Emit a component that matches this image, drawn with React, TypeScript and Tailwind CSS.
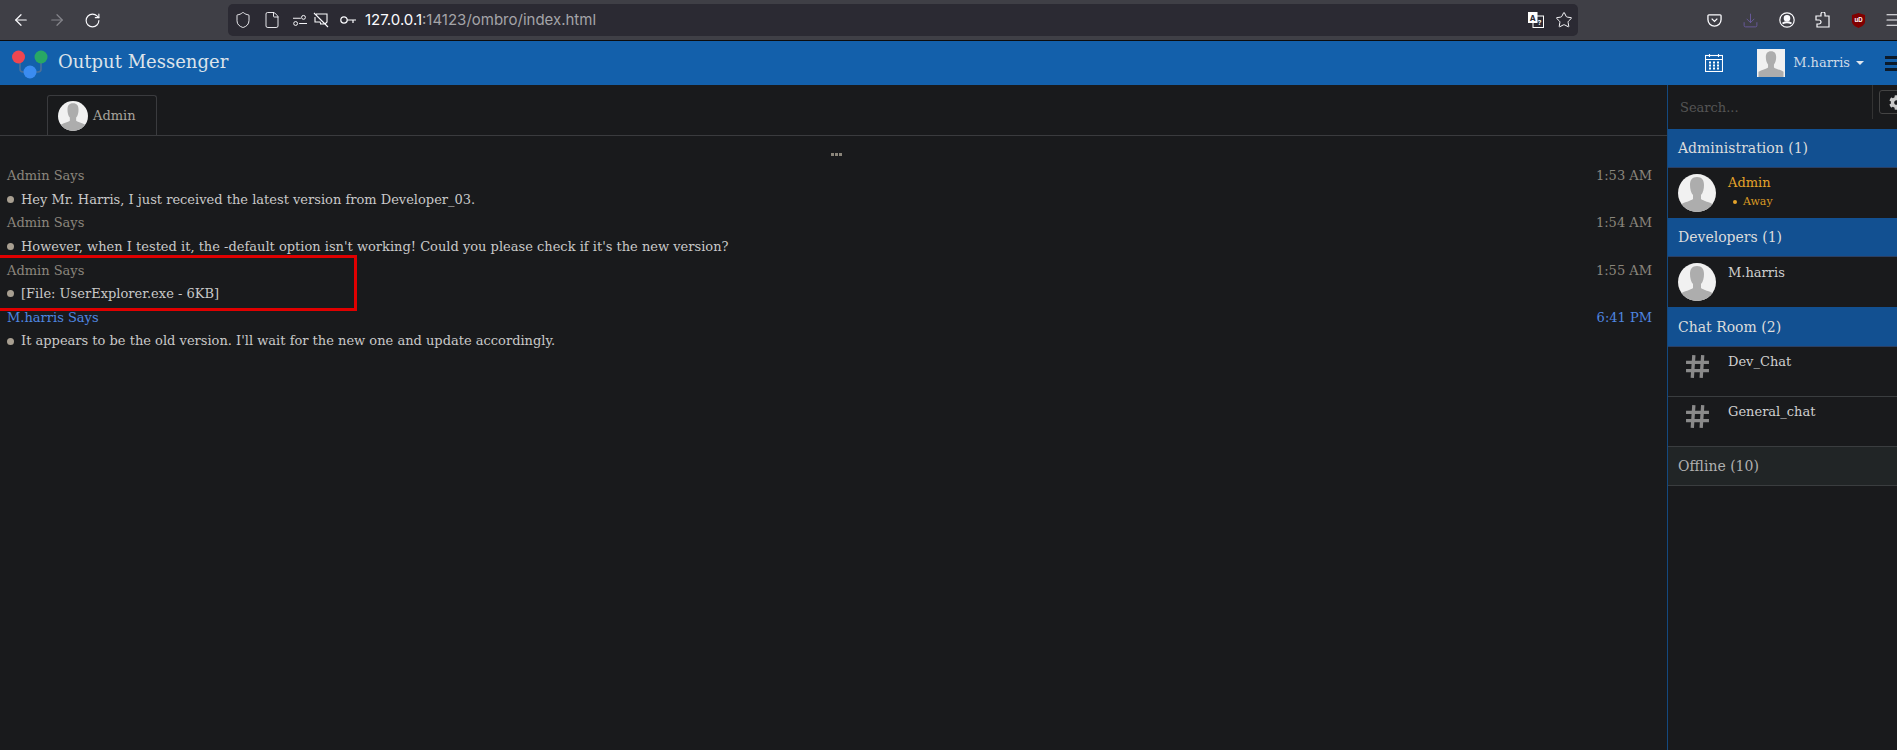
import { ArrowLeft, ArrowRight, RotateCw, Shield, File, Star, Download, Menu } from 'lucide-react';
import { FaCog } from 'react-icons/fa';

const serif = 'font-["DejaVu_Serif",serif]';

function Avatar({ size, round = true }: { size: string; round?: boolean }) {
  return (
    <svg viewBox="0 0 38 38" className={`${size} shrink-0 ${round ? 'rounded-full' : ''}`}>
      <rect width="38" height="38" fill="#f1f1f1" />
      <path d="M19 3c-5 0-7 3-7 8 0 4 1 8 3 10v4c-2 2-9 3-13 6v7h34v-7c-4-3-11-4-13-6v-4c2-2 3-6 3-10 0-5-2-8-7-8z" fill="#adadad" />
    </svg>
  );
}

function Message({ who, time, text, me }: { who: string; time: string; text: string; me?: boolean }) {
  return (
    <div className="flex flex-col">
      <div className={`flex h-[23.2px] items-center justify-between pr-[15px] pl-[7px] ${me ? 'text-[#4f86e0]' : 'text-[#8b867c]'}`}>
        <span>{who}</span>
        <span>{time}</span>
      </div>
      <div className="flex h-[24px] items-center gap-[7px] pl-[7px] text-[#c9c9c9]">
        <span className="h-[7px] w-[7px] rounded-full bg-[#a89f91]" />
        <span>{text}</span>
      </div>
    </div>
  );
}

function GroupHeader({ label, offline, tall }: { label: string; offline?: boolean; tall?: boolean }) {
  return (
    <div className={`flex items-center border-b pl-[10px] text-[14px] ${tall ? 'h-[40px] pt-px' : 'h-[39px]'} ${offline ? 'border-[#3a3d3f] bg-[#212526] text-[#b0b0b0]' : 'border-[#2b3f63] bg-[#125091] text-[#dcdcdc]'}`}>
      {label}
    </div>
  );
}

function ContactRow({ name, away }: { name: string; away?: boolean }) {
  return (
    <div className="flex h-[50px] items-start gap-[12px] pt-[6px] pl-[10px]">
      <Avatar size="h-[38px] w-[38px]" />
      <div className="flex flex-col">
        <span className={`text-[13px] leading-[17px] ${away ? 'text-[#e5a32a]' : 'mt-px text-[#d0d0d0]'}`}>{name}</span>
        {away && (
          <span className="mt-[3px] flex items-center gap-[6px] pl-[5px] text-[11px] leading-[15px] text-[#d99a24]">
            <span className="h-[4px] w-[4px] rounded-full bg-[#e5a32a]" />
            Away
          </span>
        )}
      </div>
    </div>
  );
}

function RoomRow({ name }: { name: string }) {
  return (
    <div className="flex h-[50px] items-start gap-[12px] border-b border-[#3a3d3f] pt-[6px] pl-[10px]">
      <span className="flex h-[26px] w-[38px] items-center justify-center">
        <svg viewBox="0 0 24 24" className="h-[25px] w-[25px]" fill="none" stroke="#8a8a8a" strokeWidth="3.2">
          <path d="M1 8h22M1 16h22M8.5 1 7 23M17 1l-1.5 22" />
        </svg>
      </span>
      <span className="text-[13px] leading-[17px] text-[#d0d0d0]">{name}</span>
    </div>
  );
}

export default function App() {
  return (
    <div className={`flex h-[750px] w-[1897px] flex-col overflow-hidden bg-[#191a1c] text-[13px] ${serif}`}>
      {/* browser chrome */}
      <div className="flex h-[41px] shrink-0 items-center border-b border-[#0c0c0d] bg-[#3f3f46] font-['Inter',sans-serif] text-[#fbfbfe]">
        <div className="flex w-[228px] items-center gap-[18px] pl-[12px]">
          <ArrowLeft size={18} strokeWidth={1.6} />
          <ArrowRight size={18} strokeWidth={1.6} className="text-[#85858b]" />
          <RotateCw size={17} strokeWidth={1.6} />
        </div>
        <div className="flex h-[32px] w-[1350px] items-center rounded-[5px] bg-[#2b2a33] pl-[6px]">
          <Shield size={18} strokeWidth={1.2} />
          <File size={18} strokeWidth={1.2} className="ml-[11px]" />
          <svg viewBox="0 0 16 16" className="ml-[12px] h-[14px] w-[14px]" fill="none" stroke="#fbfbfe" strokeWidth="1.1">
            <path d="M0 6h9M7 12h9" />
            <circle cx="12" cy="5" r="2.2" />
            <circle cx="3" cy="12" r="2.2" />
          </svg>
          <svg viewBox="0 0 16 16" className="ml-[6px] h-[16px] w-[16px]" fill="none" stroke="#fbfbfe" strokeWidth="1.1">
            <path d="M1 1 15 15M3 2h11v8l-2 2H7M2 5v5h5l1 2" />
          </svg>
          <svg viewBox="0 0 16 10" className="ml-[11px] h-[10px] w-[16px]" fill="none" stroke="#fbfbfe" strokeWidth="1.2">
            <circle cx="4" cy="5" r="3.2" />
            <path d="M7 5h9M13 5v3" />
          </svg>
          <span className="ml-[9px] text-[15px]">
            127.0.0.1<span className="text-[#a4a4a8]">:14123/ombro/index.html</span>
          </span>
          <div className="ml-auto flex items-center gap-[11px] pr-[5px]">
            <svg viewBox="0 0 16 16" className="h-[16px] w-[16px]">
              <rect x="5" y="4" width="10.5" height="11.5" fill="none" stroke="#fff" />
              <rect x="0" y="0" width="9.5" height="11" fill="#fff" />
              <text x="4.7" y="8.5" textAnchor="middle" fontSize="8" fontWeight="700" fill="#2b2a33">A</text>
              <text x="11.5" y="13" textAnchor="middle" fontSize="6.5" fontWeight="700" fill="#fff">?</text>
            </svg>
            <Star size={18} strokeWidth={1.3} />
          </div>
        </div>
        <div className="ml-auto flex items-center">
          <svg viewBox="0 0 16 16" className="mr-[20px] h-[15px] w-[15px]" fill="none" stroke="#fbfbfe" strokeWidth="1.4">
            <path d="M2 2h12a1 1 0 0 1 1 1v4a7 7 0 0 1-14 0V3a1 1 0 0 1 1-1z" />
            <path d="m5 6 3 3 3-3" />
          </svg>
          <Download size={17} strokeWidth={1.3} className="mr-[20px] text-[#6a5a9e]" />
          <svg viewBox="0 0 16 16" className="mr-[20px] h-[16px] w-[16px]" fill="none" stroke="#fbfbfe" strokeWidth="1.2">
            <circle cx="8" cy="8" r="7.2" />
            <circle cx="8" cy="6.3" r="2.7" fill="#fbfbfe" />
            <path d="M3.5 11.5q4.5-2.5 9 0" strokeWidth="2" />
          </svg>
          <svg viewBox="0 0 16 16" className="mr-[20px] h-[16px] w-[16px]" fill="none" stroke="#fbfbfe" strokeWidth="1.2">
            <path d="M6 3V2a2 2 0 0 1 4 0v2h4v11H2v-3h2a2 2 0 0 0 0-4H1V4h5z" />
          </svg>
          <svg viewBox="0 0 16 16" className="mr-[18px] h-[15px] w-[15px]">
            <path d="M8 0 15 2v7c0 3-3 5-7 7-4-2-7-4-7-7V2z" fill="#800000" />
            <text x="8" y="10" textAnchor="middle" fontSize="6.5" fontWeight="700" fill="#fff">uD</text>
          </svg>
          <Menu size={18} strokeWidth={1.5} className="-mr-[5px]" />
        </div>
      </div>

      {/* app header */}
      <div className="flex h-[44px] shrink-0 items-center bg-[#1360ab]">
        <svg viewBox="0 0 38 34" className="ml-[11px] h-[34px] w-[38px]">
          <path d="M9 14v9q0 3 3 3h15q3 0 3-3v-9" fill="none" stroke="#4b7099" strokeWidth="1.6" />
          <circle cx="7.5" cy="11" r="6.5" fill="#ef4650" />
          <circle cx="30" cy="11" r="6.5" fill="#28a865" />
          <circle cx="19" cy="26" r="6.5" fill="#3b8cf0" />
        </svg>
        <span className="mb-[4px] ml-[9px] text-[18px] text-[#dce3ea]">Output Messenger</span>
        <div className="ml-auto flex items-center">
          <svg viewBox="0 0 18 18" className="h-[18px] w-[18px]" fill="none" stroke="#fff" strokeWidth="1.1">
            <rect x="0.5" y="1.5" width="17" height="16" />
            <path d="M0.5 5.5h17M4.5 0v3M13.5 0v3" />
            <path d="M4 8.5h2M8 8.5h2M12 8.5h2M4 11.5h2M8 11.5h2M12 11.5h2M4 14.5h2M8 14.5h2M12 14.5h2" strokeWidth="1.8" />
          </svg>
          <div className="ml-[34px]">
            <Avatar size="h-[28px] w-[28px]" round={false} />
          </div>
          <span className="ml-[8px] text-[13px] text-[#cfdbe8]">M.harris</span>
          <span className="ml-[6px] h-0 w-0 border-x-[4px] border-t-[4px] border-x-transparent border-t-[#dfe6ee]" />
          <div className="-mr-[12px] ml-[21px] flex w-[24px] flex-col gap-[3px]">
            <span className="h-[3px] bg-[#0d1b2a]" />
            <span className="h-[3px] bg-[#0d1b2a]" />
            <span className="h-[3px] bg-[#0d1b2a]" />
          </div>
        </div>
      </div>

      <div className="flex min-h-0 flex-1">
        {/* chat */}
        <div className="relative flex w-[1667px] flex-col">
          <div className="h-[51px] shrink-0 border-b border-[#3a3b3e] pt-[10px] pl-[47px]">
            <div className="flex h-[41px] w-[110px] items-center gap-[5px] rounded-t-[3px] border border-b-0 border-[#3a3b3e] pl-[10px] text-[#a9a59c]">
              <Avatar size="h-[30px] w-[30px]" />
              <span>Admin</span>
            </div>
          </div>
          <div className="flex h-[28.4px] items-center justify-center gap-[1px] pt-[9px] pl-[6px]">
            <span className="h-[3px] w-[3px] bg-[#8a857a]" />
            <span className="h-[3px] w-[3px] bg-[#8a857a]" />
            <span className="h-[3px] w-[3px] bg-[#8a857a]" />
          </div>
          <Message who="Admin Says" time="1:53 AM" text="Hey Mr. Harris, I just received the latest version from Developer_03." />
          <Message who="Admin Says" time="1:54 AM" text="However, when I tested it, the -default option isn't working! Could you please check if it's the new version?" />
          <Message who="Admin Says" time="1:55 AM" text="[File: UserExplorer.exe - 6KB]" />
          <Message who="M.harris Says" time="6:41 PM" text="It appears to be the old version. I'll wait for the new one and update accordingly." me />
          <div className="absolute top-[170px] left-[-4px] h-[56px] w-[361px] border-[3px] border-[#e00000]" />
        </div>

        {/* sidebar */}
        <div className="relative flex min-w-0 flex-1 flex-col border-l border-[#14497f]">
          <div className="flex h-[44px] shrink-0 items-center pt-[2px] pl-[12px] text-[#555]">Search...</div>
          <div className="absolute top-0 left-[204px] h-[34px] w-px bg-[#333]" />
          <div className="absolute top-[5px] left-[211px] flex h-[24px] w-[40px] items-center rounded-[3px] border border-[#444] bg-[#191a1c] pl-[9px]">
            <FaCog size={15} className="text-[#c8c8c8]" />
          </div>
          <GroupHeader label="Administration (1)" />
          <ContactRow name="Admin" away />
          <GroupHeader label="Developers (1)" />
          <ContactRow name="M.harris" />
          <GroupHeader label="Chat Room (2)" tall />
          <RoomRow name="Dev_Chat" />
          <RoomRow name="General_chat" />
          <GroupHeader label="Offline (10)" offline />
        </div>
      </div>
    </div>
  );
}
